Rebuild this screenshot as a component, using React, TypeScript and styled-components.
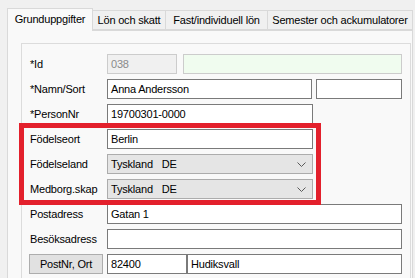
import React from 'react'
import styled, { createGlobalStyle } from 'styled-components'

const Global = createGlobalStyle`
  html, body {
    margin: 0;
    padding: 0;
    background: #f0f0f0;
  }
  * {
    box-sizing: border-box;
  }
`

const Chevron = () => (
  <svg width="9" height="5" viewBox="0 0 9 5">
    <polyline points="0.5,0.5 4.5,4.5 8.5,0.5" fill="none" stroke="#5a5a5a" strokeWidth="1" />
  </svg>
)

const App = () => {
  return (
    <Window>
      <Global />
      <TabStrip>
        <Tab active w="86px">Grunduppgifter</Tab>
        <Tab w="73px">Lön och skatt</Tab>
        <Tab w="102px">Fast/individuell lön</Tab>
        <Tab w="145px">Semester och ackumulatorer</Tab>
      </TabStrip>
      <Panel>
        <Group>
          <Row>
            <Label>*Id</Label>
            <Input disabled w="70px">038</Input>
            <Input green fill ml="6px" />
          </Row>
          <Row>
            <Label>*Namn/Sort</Label>
            <Input w="205px">Anna Andersson</Input>
            <Input fill ml="4px" />
          </Row>
          <Row>
            <Label>*PersonNr</Label>
            <Input w="206px">19700301-0000</Input>
          </Row>
          <Row>
            <Label>Födelseort</Label>
            <Input w="206px">Berlin</Input>
          </Row>
          <Row>
            <Label>Födelseland</Label>
            <Select>
              <span>Tyskland</span>
              <Code>DE</Code>
              <Arrow><Chevron /></Arrow>
            </Select>
          </Row>
          <Row>
            <Label>Medborg.skap</Label>
            <Select>
              <span>Tyskland</span>
              <Code>DE</Code>
              <Arrow><Chevron /></Arrow>
            </Select>
          </Row>
          <Row>
            <Label>Postadress</Label>
            <Input fill>Gatan 1</Input>
          </Row>
          <Row>
            <Label>Besöksadress</Label>
            <Input fill />
          </Row>
          <Row>
            <Button>PostNr, Ort</Button>
            <Input w="80px">82400</Input>
            <Input fill>Hudiksvall</Input>
          </Row>
        </Group>
      </Panel>
      <Highlight />
    </Window>
  )
}

export default App

const Highlight = styled.div`
  position: absolute;
  left: 19px;
  top: 123px;
  width: 302px;
  height: 82px;
  border: 5px solid #e3202c;
  pointer-events: none;
`

const Arrow = styled.div`
  margin-left: auto;
  display: flex;
  align-items: center;
`

const Code = styled.span`
  margin-left: 9px;
`

const Select = styled.div`
  width: 206px;
  height: 20px;
  background-color: #e5e5e5;
  border: 1px solid #acacac;
  display: flex;
  align-items: center;
  padding: 0 6px 0 3px;
  color: #000;
`

const Button = styled.div`
  width: 74px;
  height: 20px;
  margin-left: -1px;
  margin-right: 4px;
  background-color: #e1e1e1;
  border: 1px solid #adadad;
  display: flex;
  align-items: center;
  justify-content: center;
  color: #000;
`

const Input = styled.div<{ w?: string, fill?: boolean, green?: boolean, disabled?: boolean, ml?: string }>`
  width: ${(props) => props.w || 'auto'};
  flex: ${(props) => props.fill ? '1' : '0 0 auto'};
  margin-left: ${(props) => props.ml || '0'};
  height: 20px;
  border: 1px solid ${(props) => (props.disabled || props.green) ? '#cccccc' : '#7a7a7a'};
  background-color: ${(props) => props.green ? '#f0fcef' : props.disabled ? '#f0f0f0' : '#ffffff'};
  color: ${(props) => props.disabled ? '#8a8a8a' : '#000'};
  display: flex;
  align-items: center;
  padding-left: 3px;
  white-space: nowrap;
`

const Label = styled.div`
  width: 77px;
  flex: 0 0 77px;
  color: #000;
  white-space: nowrap;
`

const Row = styled.div`
  display: flex;
  align-items: center;
  height: 20px;
`

const Group = styled.div`
  border: 1px solid #dcdcdc;
  display: flex;
  flex-direction: column;
  gap: 5px;
  padding: 10px 8px 20px 8px;
`

const Panel = styled.div`
  border: 1px solid #d9d9d9;
  background-color: #f9f9f9;
  padding: 12px 1px 0 13px;
  height: 260px;
`

const Tab = styled.div<{ active?: boolean, w: string }>`
  width: ${(props) => props.w};
  height: ${(props) => props.active ? '23px' : '20px'};
  margin-bottom: ${(props) => props.active ? '-1px' : '0'};
  background-color: ${(props) => props.active ? '#f9f9f9' : '#f0f0f0'};
  border: 1px solid #d9d9d9;
  border-bottom: ${(props) => props.active ? 'none' : '1px solid #d9d9d9'};
  border-left: ${(props) => props.active ? '1px solid #d9d9d9' : 'none'};
  display: flex;
  align-items: center;
  justify-content: center;
  padding-bottom: ${(props) => props.active ? '3px' : '0'};
  white-space: nowrap;
  position: relative;
  z-index: ${(props) => props.active ? 1 : 0};
  color: #000;
`

const TabStrip = styled.div`
  display: flex;
  align-items: flex-end;
  height: 22px;
`

const Window = styled.div`
  position: relative;
  width: 415px;
  height: 278px;
  overflow: hidden;
  background-color: #f0f0f0;
  padding: 8px 2px 0 7px;
  font-family: 'Liberation Sans', Arial, sans-serif;
  font-size: 11px;
  letter-spacing: -0.2px;
`
